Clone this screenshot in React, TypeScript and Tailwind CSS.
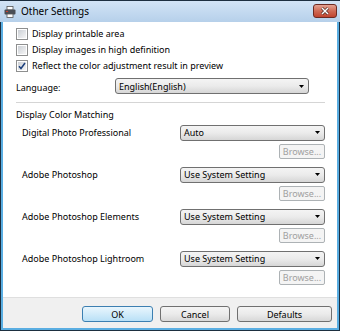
import React from "react";

const font = { fontFamily: "'Noto Sans', 'Liberation Sans', sans-serif" };

function Checkbox({ label, checked }: { label: string; checked?: boolean }) {
  return (
    <div className="h-[16px] flex items-center gap-[4px]">
      <div className="w-[12px] h-[12px] border border-[#8e8f8f] bg-white p-px">
        <div className="w-full h-full bg-gradient-to-br from-[#cbcfd5] to-[#f6f6f6] flex items-center justify-center">
          {checked && (
            <svg viewBox="0 0 8 8" className="w-[8px] h-[8px]">
              <path d="M1 4.2 L3 6.5 L7 1" stroke="#1c3f7c" strokeWidth="1.5" fill="none" />
            </svg>
          )}
        </div>
      </div>
      <span>{label}</span>
    </div>
  );
}

function Select({ value, className }: { value: string; className: string }) {
  return (
    <div className={`h-[16px] rounded-[3px] border border-[#707070] bg-gradient-to-b from-[#f4f4f4] via-[#ebebeb] to-[#d6d6d6] flex items-center justify-between pl-[3px] pr-[4px] ${className}`}>
      <span className="leading-none">{value}</span>
      <svg viewBox="0 0 5 3" className="w-[5px] h-[3px]">
        <path d="M0 0 H5 L2.5 3 Z" fill="#000" />
      </svg>
    </div>
  );
}

function Browse() {
  return (
    <div className="flex justify-end">
      <div className="w-[46px] h-[15px] rounded-[2px] border border-[#adb2b5] bg-[#f4f4f4] text-[#a0a0a0] flex items-center justify-center leading-none">
        Browse...
      </div>
    </div>
  );
}

function Group({ label, value }: { label: string; value: string }) {
  return (
    <div className="flex flex-col gap-[3px] mb-[8px]">
      <div className="flex items-center justify-between">
        <span className="pl-[6px]">{label}</span>
        <Select value={value} className="w-[145px]" />
      </div>
      <Browse />
    </div>
  );
}

function Button({ label, primary, className }: { label: string; primary?: boolean; className: string }) {
  return (
    <div
      className={`h-[16px] rounded-[3px] border flex items-center justify-center leading-none ${
        primary
          ? "border-[#3c7fb1] bg-gradient-to-b from-[#e9f6fd] to-[#b9e0f6]"
          : "border-[#707070] bg-gradient-to-b from-[#f4f4f4] via-[#ebebeb] to-[#d8d8d8]"
      } ${className}`}
    >
      {label}
    </div>
  );
}

export default function App() {
  return (
    <div className="w-[340px] h-[331px] border border-[#1d2f40] bg-[#5aaee2] flex flex-col text-[9px] text-black" style={font}>
      {/* title bar */}
      <div className="h-[21px] bg-gradient-to-b from-[#d2e4f6] to-[#b6d0ea] flex items-center pl-[3px] pr-[2px] -mx-px">
        <svg viewBox="0 0 12 12" className="w-[12px] h-[12px] ml-[1px]">
          <rect x="3" y="0.5" width="6" height="3.5" fill="#fff" stroke="#555" strokeWidth="0.8" />
          <rect x="0.5" y="3.5" width="11" height="5" rx="1" fill="#4a4e55" />
          <rect x="2" y="5" width="2" height="1" fill="#d04030" />
          <rect x="3" y="8" width="6" height="3.5" fill="#fff" stroke="#555" strokeWidth="0.8" />
        </svg>
        <span className="ml-[5px] text-[10px]">Other Settings</span>
        <div className="ml-auto mb-[2px] w-[24px] h-[14px] rounded-[3px] border border-[#6d2a22] bg-gradient-to-b from-[#e3a293] via-[#cf6a55] to-[#c0442f] flex items-center justify-center mr-[1px]">
          <svg viewBox="0 0 10 8" className="w-[10px] h-[8px]">
            <path d="M2 1 L8 7 M8 1 L2 7" stroke="#3b1a14" strokeWidth="2.6" />
            <path d="M2 1 L8 7 M8 1 L2 7" stroke="#fff" strokeWidth="1.5" />
          </svg>
        </div>
      </div>

      {/* client area */}
      <div className="flex-1 mx-[2px] flex flex-col bg-white">
        <div className="flex-1 flex flex-col pl-[13px] pr-[12px] pt-[4px]">
          <Checkbox label="Display printable area" />
          <Checkbox label="Display images in high definition" />
          <Checkbox label="Reflect the color adjustment result in preview" checked />

          <div className="mt-[4px] flex items-center">
            <span className="w-[99px] pt-[3px]">Language:</span>
            <Select value="English(English)" className="w-[194px]" />
          </div>

          <div className="mt-[7px] h-px bg-[#d5d5d5]" />

          <div className="mt-[5px] h-[14px] flex items-center">Display Color Matching</div>

          <div className="mt-[3px] flex flex-col">
            <Group label="Digital Photo Professional" value="Auto" />
            <Group label="Adobe Photoshop" value="Use System Setting" />
            <Group label="Adobe Photoshop Elements" value="Use System Setting" />
            <Group label="Adobe Photoshop Lightroom" value="Use System Setting" />
          </div>
        </div>

        <div className="h-[31px] border-t border-[#dfdfdf] bg-[#f0f0f0] flex items-start justify-end gap-[7px] pt-[8px] pr-[5px]">
          <Button label="OK" primary className="w-[71px]" />
          <Button label="Cancel" className="w-[70px]" />
          <Button label="Defaults" className="w-[95px]" />
        </div>
      </div>
      <div className="h-[2px]" />
    </div>
  );
}
